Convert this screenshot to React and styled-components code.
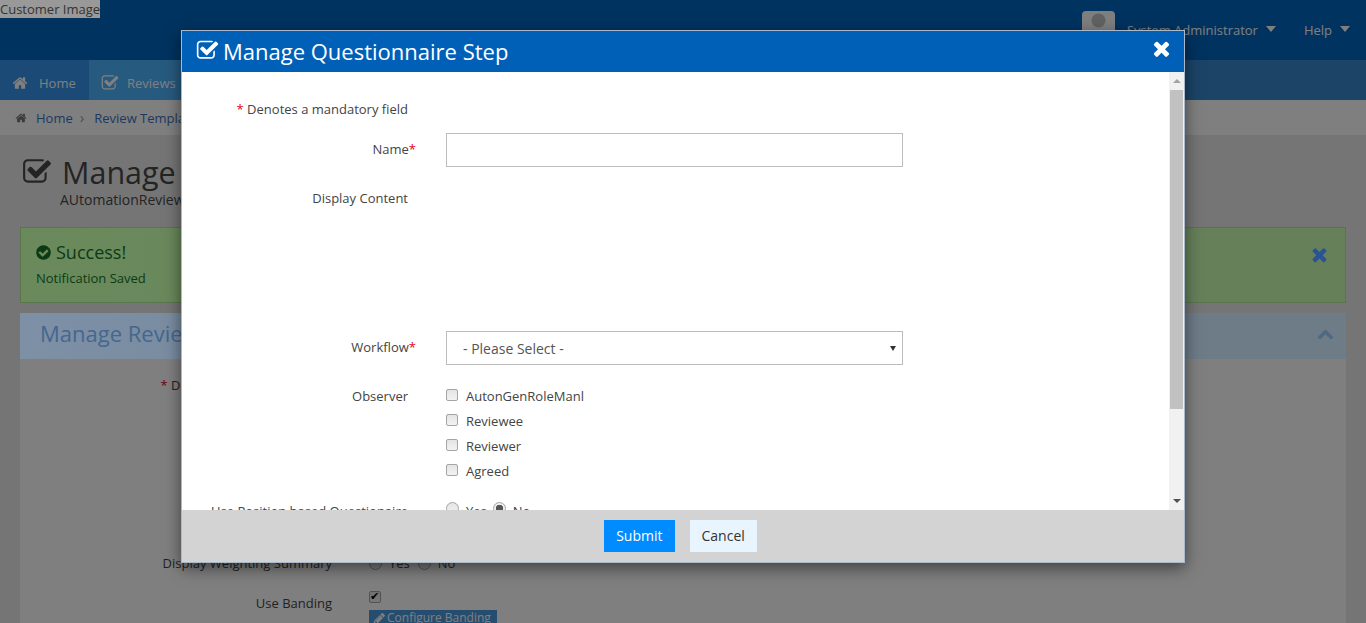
import styled, { createGlobalStyle } from "styled-components";

const GlobalStyle = createGlobalStyle`
  html, body {
    margin: 0;
    padding: 0;
    height: 100%;
    overflow: hidden;
    background: #eaeaea;
    font-family: "Open Sans", "Liberation Sans", sans-serif;
    font-size: 13px;
    color: #333;
  }
  * { box-sizing: border-box; }
`;

const ICONS = {
  check:
    "M1472 930v318q0 119-84.5 203.5t-203.5 84.5h-832q-119 0-203.5-84.5t-84.5-203.5v-832q0-119 84.5-203.5t203.5-84.5h832q63 0 117 25 15 7 18 23 3 17-9 29l-49 49q-10 10-23 10-3 0-9-2-23-6-45-6h-832q-66 0-113 47t-47 113v832q0 66 47 113t113 47h832q66 0 113-47t47-113v-254q0-13 9-22l64-64q10-10 23-10 6 0 12 3 20 8 20 29zm231-489l-814 814q-24 24-57 24t-57-24l-430-430q-24-24-24-57t24-57l110-110q24-24 57-24t57 24l263 263 647-647q24-24 57-24t57 24l110 110q24 24 24 57t-24 57z",
  home:
    "M1472 992v480q0 26-19 45t-45 19h-384v-384h-256v384h-384q-26 0-45-19t-19-45v-480q0-1 .5-3t.5-3l575-474 575 474q1 2 1 6zm223-69l-62 74q-8 9-21 11h-3q-13 0-21-7l-692-577-692 577q-12 8-24 7-13-2-21-11l-62-74q-8-10-7-23.5t11-21.5l719-599q32-26 76-26t76 26l244 204v-195q0-14 9-23t23-9h192q14 0 23 9t9 23v408l219 182q10 8 11 21.5t-7 23.5z",
  times:
    "M1490 1322q0 40-28 68l-136 136q-28 28-68 28t-68-28l-294-294-294 294q-28 28-68 28t-68-28l-136-136q-28-28-28-68t28-68l294-294-294-294q-28-28-28-68t28-68l136-136q28-28 68-28t68 28l294 294 294-294q28-28 68-28t68 28l136 136q28 28 28 68t-28 68l-294 294 294 294q28 28 28 68z",
  circle:
    "M1412 734q0-28-18-46l-91-90q-19-19-45-19t-45 19l-408 407-226-226q-19-19-45-19t-45 19l-91 90q-18 18-18 46 0 27 18 45l362 362q19 19 45 19 27 0 46-19l543-543q18-18 18-45zm252 162q0 209-103 385.5t-279.5 279.5-385.5 103-385.5-103-279.5-279.5-103-385.5 103-385.5 279.5-279.5 385.5-103 385.5 103 279.5 279.5 103 385.5z",
  up:
    "M1683 1331l-166 165q-19 19-45 19t-45-19l-531-531-531 531q-19 19-45 19t-45-19l-166-165q-19-19-19-45.5t19-45.5l742-741q19-19 45-19t45 19l742 741q19 19 19 45.5t-19 45.5z",
  pencil:
    "M491 1536l91-91-235-235-91 91v107h128v128h107zm523-928q0-22-22-22-10 0-17 7l-542 542q-7 7-7 17 0 22 22 22 10 0 17-7l542-542q7-7 7-17zm-54-192l416 416-832 832h-416v-416zm683 96q0 53-37 90l-166 166-416-416 166-165q36-38 90-38 53 0 91 38l235 234q37 39 37 91z",
};

function Icon({ name, size = 14, className }) {
  return (
    <svg className={className} width={size} height={size} viewBox="0 0 1792 1792" fill="currentColor">
      <path d={ICONS[name]} />
    </svg>
  );
}

function App() {
  return (
    <Page>
      <GlobalStyle />
      <TopBar>
        <CustomerImage>Customer Image</CustomerImage>
        <UserMenu>
          <Avatar>
            <svg width="33" height="33" viewBox="0 0 33 33">
              <circle cx="16.5" cy="9.5" r="7" fill="#c4c4c4" />
              <path d="M4 33c0-10 6-14 12.5-14S29 23 29 33z" fill="#c4c4c4" />
            </svg>
          </Avatar>
          <UserLink $width={177}>
            System Administrator <Caret />
          </UserLink>
          <UserLink>
            Help <Caret />
          </UserLink>
        </UserMenu>
      </TopBar>

      <NavBar>
        <NavItem $width={89} $bg="#3894ee" $gap={11}>
          <Icon name="home" size={16} /> Home
        </NavItem>
        <NavItem $width={110} $bg="#4eb4ff" $gap={8}>
          <Icon name="check" size={18} /> Reviews
        </NavItem>
      </NavBar>

      <Breadcrumb>
        <CrumbHome>
          <Icon name="home" size={12} />
        </CrumbHome>
        <Crumb>Home</Crumb>
        <CrumbSep>›</CrumbSep>
        <Crumb>Review Templates</Crumb>
      </Breadcrumb>

      <TitleBlock>
        <PageTitle>
          <Icon name="check" size={30} />
          <span>Manage Review Template</span>
        </PageTitle>
        <SubTitle>AUtomationReview</SubTitle>
      </TitleBlock>

      <Alert>
        <div>
          <AlertTitle>
            <Icon name="circle" size={17} />
            Success!
          </AlertTitle>
          <AlertText>Notification Saved</AlertText>
        </div>
        <AlertClose>
          <Icon name="times" size={21} />
        </AlertClose>
      </Alert>

      <PanelHeading>
        <PanelTitle>Manage Review Template</PanelTitle>
        <Icon name="up" size={17} />
      </PanelHeading>

      <PanelBody>
        <PanelRow $top={16} $bottom={158}>
          <PanelLabel>
            <Star>*</Star> Denotes a mandatory field
          </PanelLabel>
        </PanelRow>
        <PanelRow $bottom={20}>
          <PanelLabel>Display Weighting Summary</PanelLabel>
          <Radios $space={1}>
            <Radio type="radio" name="weighting" />
            <span>Yes</span>
            <Radio type="radio" name="weighting" />
            <span>No</span>
          </Radios>
        </PanelRow>
        <PanelRow>
          <PanelLabel>Use Banding</PanelLabel>
          <BandingField>
            <Check type="checkbox" defaultChecked />
            <BandingButton>
              <Icon name="pencil" size={13} /> Configure Banding
            </BandingButton>
          </BandingField>
        </PanelRow>
      </PanelBody>

      <Overlay />

      <Modal>
        <ModalHeader>
          <ModalTitle>
            <Icon name="check" size={23} />
            Manage Questionnaire Step
          </ModalTitle>
          <ModalClose>
            <Icon name="times" size={23} />
          </ModalClose>
        </ModalHeader>

        <ModalBody>
          <ModalContent>
            <FormRow $top={27}>
              <FormLabel>
                <Star>*</Star> Denotes a mandatory field
              </FormLabel>
            </FormRow>
            <FormRow $top={14}>
              <FormLabel $nudge={6}>
                Name<Required>*</Required>
              </FormLabel>
              <TextInput type="text" />
            </FormRow>
            <FormRow $top={21} $height={143}>
              <FormLabel>Display Content</FormLabel>
            </FormRow>
            <FormRow>
              <FormLabel $nudge={6}>
                Workflow<Required>*</Required>
              </FormLabel>
              <SelectWrap>
                <Select defaultValue="">
                  <option value="">- Please Select -</option>
                </Select>
              </SelectWrap>
            </FormRow>
            <FormRow $top={18}>
              <FormLabel $nudge={3}>Observer</FormLabel>
              <CheckList>
                {["AutonGenRoleManl", "Reviewee", "Reviewer", "Agreed"].map((role) => (
                  <CheckItem key={role}>
                    <Check type="checkbox" />
                    {role}
                  </CheckItem>
                ))}
              </CheckList>
            </FormRow>
            <FormRow $top={15}>
              <FormLabel $nudge={3}>Use Position based Questionaire</FormLabel>
              <Radios $space={-1} $drop={6}>
                <Radio type="radio" name="position" />
                <span>Yes</span>
                <Radio type="radio" name="position" defaultChecked />
                <span>No</span>
              </Radios>
            </FormRow>
          </ModalContent>
          <ScrollBar>
            <ScrollArrow $up />
            <ScrollTrack>
              <ScrollThumb />
            </ScrollTrack>
            <ScrollArrow />
          </ScrollBar>
        </ModalBody>

        <ModalFooter>
          <FooterButton $primary>Submit</FooterButton>
          <FooterButton>Cancel</FooterButton>
        </ModalFooter>
      </Modal>
    </Page>
  );
}

const Page = styled.div`
  position: relative;
  height: 623px;
  overflow: hidden;
`;

const TopBar = styled.header`
  height: 60px;
  background: #0066c0;
  display: flex;
  justify-content: space-between;
  align-items: flex-start;
`;

const CustomerImage = styled.div`
  position: relative;
  z-index: 3;
  background: #999;
  color: #333;
  font-size: 13px;
  line-height: 18px;
  height: 18px;
  white-space: nowrap;
`;

const UserMenu = styled.div`
  display: flex;
  align-items: center;
  padding-top: 11px;
  padding-right: 16px;
`;

const Avatar = styled.div`
  width: 33px;
  height: 33px;
  background: #fff;
  border-radius: 4px;
  overflow: hidden;
  margin-right: 12px;
`;

const UserLink = styled.div`
  width: ${(p) => (p.$width ? `${p.$width}px` : "auto")};
  color: #fff;
  font-size: 13px;
  display: flex;
  align-items: center;
  gap: 8px;
  white-space: nowrap;
  margin-top: 5px;
`;

const Caret = styled.i`
  display: block;
  margin-top: -3px;
  border-left: 5.5px solid transparent;
  border-right: 5.5px solid transparent;
  border-top: 6px solid #fff;
`;

const NavBar = styled.nav`
  height: 40px;
  background: #3688ce;
  display: flex;
`;

const NavItem = styled.div`
  width: ${(p) => p.$width}px;
  background: ${(p) => p.$bg};
  color: #fff;
  font-size: 13px;
  display: flex;
  align-items: center;
  gap: ${(p) => p.$gap}px;
  padding: 6px 0 0 12px;
`;

const Breadcrumb = styled.div`
  height: 35px;
  background: #fff;
  padding-left: 15px;
  display: flex;
  align-items: center;
  color: #777;
  gap: 7px;
  font-size: 13px;
`;

const CrumbHome = styled.span`
  display: flex;
  margin-right: 2px;
`;

const Crumb = styled.span`
  color: #3b73c0;
`;

const CrumbSep = styled.span`
  color: #999;
  font-size: 15px;
  line-height: 1;
  padding-right: 3px;
`;

const TitleBlock = styled.div`
  height: 92px;
  padding: 16px 0 0 22px;
`;

const PageTitle = styled.h1`
  margin: 0;
  display: flex;
  align-items: center;
  gap: 10px;
  font-size: 30.5px;
  font-weight: 400;
  line-height: 42px;
  color: #484848;
  white-space: nowrap;
`;

const SubTitle = styled.div`
  margin-left: 38px;
  margin-top: -3px;
  font-size: 14px;
  line-height: 20px;
  color: #484848;
`;

/* the alert and panel heading read brighter than the backdrop would leave them */
const Alert = styled.div`
  position: relative;
  z-index: 2;
  height: 76px;
  margin: 0 20px 10px;
  background: linear-gradient(90deg, #6a8a5c, #66805a 60%);
  border: 1px solid #5a744e;
  color: #0c3a14;
  display: flex;
  justify-content: space-between;
  padding: 12px 15px 0 14px;
`;

const AlertTitle = styled.div`
  display: flex;
  align-items: center;
  gap: 4px;
  font-size: 18px;
  line-height: 24px;
`;

const AlertText = styled.div`
  margin-top: 5px;
  margin-left: 1px;
  font-size: 13px;
  line-height: 18px;
`;

const AlertClose = styled.div`
  color: #2a5296;
  padding-top: 4px;
`;

const PanelHeading = styled.div`
  position: relative;
  z-index: 2;
  height: 46px;
  margin: 0 20px;
  padding: 0 12px 6px 20px;
  background: linear-gradient(90deg, #7d90a6, #6e7c88 60%);
  color: #4f6a80;
  display: flex;
  justify-content: space-between;
  align-items: center;
`;

const PanelTitle = styled.h2`
  margin: 0;
  font-size: 22px;
  font-weight: 400;
  color: #44678f;
`;

const PanelBody = styled.div`
  margin: 0 20px;
  height: 300px;
  background: #fff;
`;

const PanelRow = styled.div`
  display: flex;
  padding-top: ${(p) => p.$top || 0}px;
  margin-bottom: ${(p) => p.$bottom || 0}px;
`;

const PanelLabel = styled.div`
  width: 312px;
  margin-right: 37px;
  text-align: right;
  line-height: 20px;
  color: #444;
  white-space: nowrap;
`;

const Star = styled.span`
  color: #e2001a;
`;

const Radios = styled.div`
  display: flex;
  align-items: center;
  gap: 7px;
  height: 20px;
  color: #444;
  span {
    margin-right: ${(p) => p.$space}px;
    margin-top: ${(p) => p.$drop || 0}px;
  }
`;

const BandingField = styled.div`
  display: flex;
  flex-direction: column;
  align-items: flex-start;
  gap: 6px;
  margin-top: -1px;
`;

const BandingButton = styled.div`
  width: 128px;
  height: 30px;
  background: #4a9ae0;
  color: #fff;
  font-size: 12px;
  display: flex;
  align-items: flex-start;
  gap: 1px;
  padding: 0 0 0 4px;
  line-height: 16px;
  white-space: nowrap;
  svg { margin-top: 2px; }
`;

const Overlay = styled.div`
  position: absolute;
  inset: 0;
  z-index: 1;
  background: rgba(0, 0, 0, 0.5);
`;

const Modal = styled.div`
  position: absolute;
  z-index: 3;
  left: 181px;
  top: 30px;
  width: 1004px;
  height: 533px;
  display: flex;
  flex-direction: column;
  background: #fff;
  border: 1px solid #a9b9c9;
  box-shadow: 0 5px 15px rgba(0, 0, 0, 0.5);
`;

const ModalHeader = styled.div`
  height: 41px;
  flex: none;
  background: #0060b8;
  color: #fff;
  display: flex;
  justify-content: space-between;
  align-items: center;
  padding: 0 11px 2px 14px;
`;

const ModalTitle = styled.h3`
  margin: 0;
  display: flex;
  align-items: center;
  gap: 4px;
  font-size: 22px;
  font-weight: 400;
  white-space: nowrap;
`;

const ModalClose = styled.div`
  display: flex;
  margin-top: -4px;
`;

const ModalBody = styled.div`
  flex: 1;
  min-height: 0;
  display: flex;
`;

const ModalContent = styled.div`
  flex: 1;
  overflow: hidden;
`;

const FormRow = styled.div`
  display: flex;
  align-items: flex-start;
  margin-top: ${(p) => p.$top || 0}px;
  min-height: ${(p) => p.$height || 0}px;
`;

const FormLabel = styled.div`
  width: 226px;
  margin-right: 38px;
  margin-top: ${(p) => p.$nudge || 0}px;
  text-align: right;
  line-height: 20px;
  color: #444;
  white-space: nowrap;
`;

const Required = styled.span`
  color: #e2001a;
  margin-right: -8px;
`;

const TextInput = styled.input`
  width: 457px;
  height: 34px;
  border: 1px solid #bdbdbd;
  background: #fff;
  outline: none;
`;

const SelectWrap = styled.div`
  position: relative;
  width: 457px;
  height: 34px;

  &::after {
    content: "";
    position: absolute;
    right: 7px;
    top: 15px;
    border-left: 3px solid transparent;
    border-right: 3px solid transparent;
    border-top: 5px solid #333;
  }
`;

const Select = styled.select`
  appearance: none;
  width: 100%;
  height: 100%;
  border: 1px solid #bdbdbd;
  border-radius: 0;
  background: #fff;
  color: #555;
  font-family: inherit;
  font-size: 14px;
  padding-left: 16px;
  outline: none;
`;

const CheckList = styled.div`
  display: flex;
  flex-direction: column;
`;

const CheckItem = styled.label`
  height: 25px;
  display: flex;
  align-items: center;
  gap: 8px;
  color: #444;
`;

const Check = styled.input`
  appearance: none;
  width: 12px;
  height: 12px;
  margin: 0;
  flex: none;
  background: linear-gradient(#e4e4e4, #f2f2f2);
  border: 1px solid #a5a5a5;
  border-radius: 2px;
  position: relative;
  top: -1px;

  &:checked::before {
    content: "✔";
    position: absolute;
    left: 0;
    top: -2px;
    font-family: "DejaVu Sans", sans-serif;
    font-size: 11px;
    line-height: 14px;
    color: #000;
  }
`;

const Radio = styled.input`
  appearance: none;
  width: 13px;
  height: 13px;
  margin: 0;
  flex: none;
  background: linear-gradient(#e4e4e4, #f2f2f2);
  border: 1px solid #a5a5a5;
  border-radius: 50%;

  &:checked {
    background: radial-gradient(circle, #555 0 3.5px, #eee 4px);
  }
`;

const ScrollBar = styled.div`
  width: 15px;
  flex: none;
  display: flex;
  flex-direction: column;
  background: #f1f1f1;
`;

const ScrollArrow = styled.div`
  height: 18px;
  flex: none;
  display: flex;
  align-items: center;
  justify-content: center;

  &::before {
    content: "";
    border-left: 4px solid transparent;
    border-right: 4px solid transparent;
    ${(p) => (p.$up ? "border-bottom: 4px solid #a3a3a3;" : "border-top: 4px solid #505050;")}
  }
`;

const ScrollTrack = styled.div`
  flex: 1;
  padding: 0 1px;
`;

const ScrollThumb = styled.div`
  height: 319px;
  background: #c1c1c1;
`;

const ModalFooter = styled.div`
  height: 52px;
  flex: none;
  background: #d3d3d3;
  display: flex;
  justify-content: center;
  align-items: center;
  gap: 15px;
  padding-right: 5px;
`;

const FooterButton = styled.button`
  height: 32px;
  padding: 0 12px 1px;
  border: none;
  border-radius: 0;
  background: ${(p) => (p.$primary ? "#008cff" : "#e8f4fe")};
  color: ${(p) => (p.$primary ? "#fff" : "#333")};
  font-family: inherit;
  font-size: 14px;
`;

export default App;
